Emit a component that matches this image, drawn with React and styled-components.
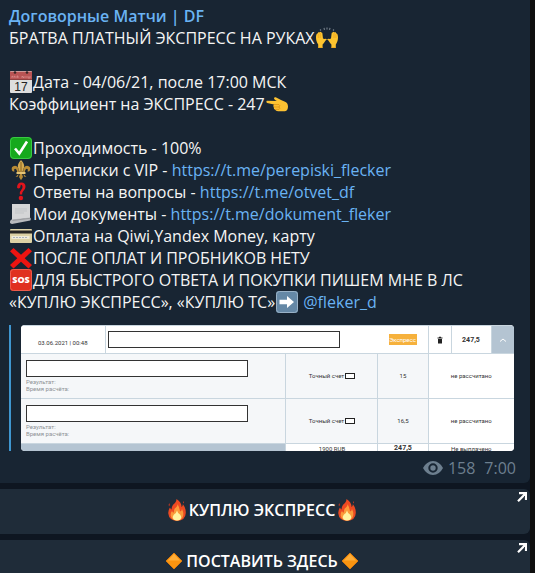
import React from 'react'
import styled, { createGlobalStyle } from 'styled-components'

const GlobalStyle = createGlobalStyle`
  * {
    box-sizing: border-box;
  }
  html, body, #root {
    height: 100%;
  }
  body {
    margin: 0;
    overflow: hidden;
    background: #0e1621;
    font-family: "Open Sans", "Noto Sans", sans-serif;
    font-size: 16px;
    line-height: 22px;
    color: #f5f5f5;
  }
`

const Page = styled.div`
  height: 100%;
  overflow: hidden;
  padding-right: 5px;
  background: linear-gradient(#0f0f0f, #0f0f0f) right / 5px 100% no-repeat;
`

const Chat = styled.main`
  display: flex;
  flex-direction: column;
  gap: 6px;
  background: #0e1621;
`

const Bubble = styled.article`
  padding: 5px 14px 4px 9px;
  background: #182533;
  border-bottom-right-radius: 6px;
`

const Channel = styled.h1`
  margin: 0;
  font-size: 16px;
  line-height: 22px;
  font-weight: 600;
  color: #6ab3f3;
`

const Line = styled.p`
  margin: 0;
  min-height: 22px;
`

const Link = styled.a`
  color: #6ab3f3;
  text-decoration: none;
`

const Emoji = styled.svg`
  width: 22px;
  height: 22px;
  margin: 0 1px;
  vertical-align: -5px;
`

const Preview = styled.div`
  margin: 12px 2px 0 0;
  padding-left: 10px;
  border-left: 2px solid #3f96d0;
`

const Shot = styled.div`
  height: 126px;
  overflow: hidden;
  border-radius: 4px;
  background: #fff;
`

const Bets = styled.table`
  width: 100%;
  table-layout: fixed;
  border-collapse: collapse;
  font-family: Roboto, sans-serif;
  font-size: 6px;
  line-height: 7px;
  color: #333;
`

const Col = styled.col`
  width: ${(props) => props.$width};
`

const Row = styled.tr`
  height: ${(props) => props.$height};
`

const Cell = styled.td`
  padding: ${(props) => props.$pad || '0'};
  border: 1px solid #c9d6df;
  border-left-width: ${(props) => (props.$first ? '0' : '1px')};
  border-right-width: 0;
  background: ${(props) => props.$bg || '#fff'};
  text-align: ${(props) => props.$align || 'center'};
  vertical-align: ${(props) => props.$valign || 'middle'};
  font-weight: ${(props) => (props.$bold ? 700 : 400)};
  font-size: ${(props) => (props.$bold ? '7px' : '6px')};
`

const HeadInner = styled.div`
  display: flex;
  align-items: center;
  justify-content: space-between;
  padding: 0 11px 0 2px;
`

const Hidden = styled.div`
  width: ${(props) => props.$width};
  height: 17px;
  border: 1px solid #333;
  background: #fff;
`

const SmallHidden = styled.span`
  display: inline-block;
  width: 10px;
  height: 6px;
  margin-left: 1px;
  border: 1px solid #222;
  background: #fff;
  vertical-align: -1px;
`

const Badge = styled.span`
  width: 28px;
  height: 11px;
  line-height: 11px;
  background: #f6b13c;
  color: #fff;
`

const Muted = styled.div`
  margin-top: 1px;
  color: #8e9296;
`

const TinyIcon = styled.svg`
  display: block;
  width: 8px;
  height: 8px;
  margin: 0 auto;
`

const Meta = styled.footer`
  display: flex;
  justify-content: flex-end;
  align-items: center;
  gap: 9px;
  margin-top: 6px;
  color: #6d7f8f;
`

const Views = styled.span`
  display: flex;
  align-items: center;
  gap: 5px;
`

const Eye = styled.svg`
  width: 20px;
  height: 14px;
`

const Action = styled.button`
  display: grid;
  grid-template-columns: 1fr;
  justify-items: center;
  align-items: center;
  position: relative;
  width: 100%;
  height: 45px;
  padding: 0 6px 4px 0;
  border: 0;
  border-radius: 0 6px 6px 0;
  background: #1f2c39;
  color: #fff;
  font: 600 16px/22px "Open Sans", "Noto Sans", sans-serif;
  cursor: pointer;
`

const Corner = styled.svg`
  position: absolute;
  top: 3px;
  right: 3px;
  width: 10px;
  height: 10px;
`

const Hands = () => (
  <Emoji viewBox="0 0 22 22" aria-hidden="true">
    <path d="M4 2.500l1 1M8 .8l.5 2M11 .5v2M14 .8l-.5 2M18 2.500l-1 1" stroke="#78838d" strokeWidth="1.1" />
    <path d="M2.200 21v-3.600C.6 15.400 0 12.800 0 10.200 0 8 .8 6.400 1.600 6.600L2.400 5.200Q3.200 4.500 3.700 5.400 4.600 4.200 5.300 5.500 6.300 5 6.400 6.600L7 11.500 8.300 12Q9.500 11.500 11 12.200L9.600 13.600Q8.400 15.700 6.600 17.500V21Z" fill="#fdc42f" />
    <path d="M19.800 21v-3.600C21.400 15.400 22 12.800 22 10.200 22 8 21.200 6.400 20.400 6.600L19.600 5.200Q18.800 4.500 18.300 5.400 17.400 4.200 16.700 5.500 15.700 5 15.600 6.600L15 11.500 13.700 12Q12.500 11.500 11 12.200L12.400 13.600Q13.600 15.700 15.400 17.500V21Z" fill="#fdc42f" />
    <path d="M2.300 7v4M4.200 6v5M18 6v5M19.900 7v4M2.200 20.500h4.400M15.400 20.500h4.400" stroke="#e79a18" strokeWidth=".6" />
  </Emoji>
)

const Calendar = () => (
  <Emoji viewBox="0 0 22 22" aria-hidden="true">
    <rect width="22" height="22" rx="1" fill="#dedede" />
    <path d="M0 .5h22V8H0z" fill="#b95454" />
    <path d="M0 8h22v1H0z" fill="#8f4040" />
    <path d="M2 7V5l1.500 1L5 5v2M7 7V5h1v2M12 7V5l2 2V5M16 7V5M18 5v2h2V5" stroke="#e09c9c" strokeWidth=".6" fill="none" />
    <circle cx="5" cy="1.500" r="1.300" fill="#3a2525" />
    <circle cx="17" cy="1.500" r="1.300" fill="#3a2525" />
    <text x="11" y="20" textAnchor="middle" fontFamily="Liberation Sans, sans-serif" fontSize="12" fill="#222">17</text>
  </Emoji>
)

const PointLeft = () => (
  <Emoji viewBox="0 -3 22 22" aria-hidden="true">
    <path d="M.8 4.700Q-.2 6.200 1.200 7.100L8 8.600Q6.800 10 7.800 11.300 7.600 13 9.200 13.800 9.700 15.200 12 15.200H19Q22 14.500 22 10.500 21.900 6.600 18.500 5.500L15 4 9.700 1.300Q8.300 .8 8 2.300 8 3.200 9.500 4.200L10.800 5Z" fill="#fdc232" />
    <path d="M8 8.600h5Q14.500 9.500 13 11H8M9.200 13.300h4Q14.500 12.600 13 11" fill="none" stroke="#d98b12" strokeWidth=".8" />
  </Emoji>
)

const Check = () => (
  <Emoji viewBox="0 0 22 22" aria-hidden="true">
    <rect width="22" height="22" rx="4" fill="#16a91d" />
    <rect x=".5" y=".5" width="21" height="21" rx="3.500" fill="none" stroke="#39c943" />
    <path d="M5 11.500l4.300 5L17 4.500" fill="none" stroke="#fff" strokeWidth="2.600" />
  </Emoji>
)

const Lily = () => (
  <Emoji viewBox="0 0 22 22" aria-hidden="true">
    <path d="M11 1Q15 5 14 8.500L12.500 13h-3L8 8.500Q7 5 11 1z" fill="#d3a950" />
    <path d="M9 13.300Q9 7 5 6.800 1 7.200 1.800 11 2.500 13 4.500 12.500 3.500 10 5.300 9.800 7 10.300 7.200 14zM13 13.300Q13 7 17 6.800 21 7.200 20.200 11 19.500 13 17.500 12.500 18.500 10 16.700 9.800 15 10.300 14.800 14z" fill="#b88b35" />
    <path d="M6.500 13h9v2h-9z" fill="#e6c576" />
    <path d="M10 15h2l1 3-2 3.200L9 18zM8.500 15L5.500 18l2.500-.5zM13.500 15l3 3-2.500-.5z" fill="#b88b35" />
    <path d="M11 3v10" stroke="#795415" strokeWidth=".8" />
  </Emoji>
)

const Question = () => (
  <Emoji viewBox="0 0 22 22" aria-hidden="true">
    <path d="M7 6.500Q7.300 1.500 11.300 1.500 15.700 1.700 15.500 6 15.300 8.300 13.300 10 12 11.200 12.100 13.500H9.800Q9.500 10.500 11.300 8.800 12.700 7.500 12.500 5.500 12.200 3.400 10.800 3.700L10.200 6.500Q8.500 8.500 7 6.500z" fill="#e2141c" />
    <circle cx="10.900" cy="17" r="2.200" fill="#e2141c" />
  </Emoji>
)

const Scroll = () => (
  <Emoji viewBox="0 0 22 22" aria-hidden="true">
    <path d="M2 1h18v14L2 17z" fill="#d5d6d7" />
    <path d="M1.500 16.500L20 14.500q1.500 1 .3 3L2 21Q-.5 20.500 0 18.500.4 16.800 1.500 16.500z" fill="#b9bbbe" />
    <path d="M2.500 17.500L20 15.300" stroke="#85878a" strokeWidth=".6" />
    <path d="M5 6h12M5 8h12M5 10h9" stroke="#bcbec0" strokeWidth=".7" />
  </Emoji>
)

const Card = () => (
  <Emoji viewBox="0 0 22 22" aria-hidden="true">
    <rect y="4" width="22" height="14" rx="1" fill="#ddd2a5" />
    <path d="M0 5.500h22V8.500H0z" fill="#262523" />
    <path d="M1.500 11h18v3h-18z" fill="#f0ecd8" />
    <path d="M3 12.500h14" stroke="#9ba4b7" strokeWidth=".8" strokeDasharray="2 1" />
  </Emoji>
)

const Cross = () => (
  <Emoji viewBox="0 0 22 22" aria-hidden="true">
    <path d="M3.500 1L11 7.800 18.500 1 22 4.200 14.700 11.200 22 18 18.500 21.500 11 14.800 3.500 21.500 0 18 7.300 11.200 0 4.200z" fill="#ee1411" />
  </Emoji>
)

const Sos = () => (
  <Emoji viewBox="0 0 22 22" aria-hidden="true">
    <rect width="22" height="22" rx="3" fill="#e0301f" />
    <rect x=".5" y=".5" width="21" height="21" rx="3" fill="none" stroke="#ec5c4d" />
    <text x="11" y="14" textAnchor="middle" fontFamily="Open Sans, sans-serif" fontWeight="800" fontSize="9" fill="#fff">SOS</text>
  </Emoji>
)

const ArrowRight = () => (
  <Emoji viewBox="0 0 22 22" aria-hidden="true">
    <rect width="22" height="22" rx="3" fill="#6588a6" />
    <rect x=".5" y=".5" width="21" height="21" rx="3" fill="none" stroke="#9ab2c7" />
    <path d="M3.500 8.700H11V5l7 6-7 6v-3.700H3.500z" fill="#fff" />
  </Emoji>
)

const Fire = () => (
  <Emoji viewBox="0 0 22 22" aria-hidden="true">
    <path d="M10.500 0Q15.500 3 15.500 8 17 7.500 16.800 5 20 9 19.800 14 19.500 21.500 11 22 3 21.500 2.300 14.500 2 11.500 4 8.500 4.500 10 5.500 10.500 5.700 6 9 4 10.500 2.500 10.500 0z" fill="#ec4a22" />
    <path d="M3.500 4Q2 5.500 3 7.500 4.300 6 3.500 4zM17.500 2Q16.500 3 17.500 4.500 18.500 3.500 17.500 2z" fill="#d9371f" />
    <path d="M11.500 5Q13.500 8.500 14 12.500 15.800 12 16 10 18 14 17 17.500 15.500 21.500 11 21.700 6 21.500 4.700 17 4.300 14 6 12 7 14 8 13.500 7.500 10 10 8.500 11.800 7 11.500 5z" fill="#fb9a3a" />
    <path d="M11 11.500Q11.500 14 14 15.500 16.500 18.500 14 20.800 11 22.300 8 20.800 5.500 18.500 8 15.500 10.500 14 11 11.500z" fill="#fff3a0" />
  </Emoji>
)

const Diamond = () => (
  <Emoji viewBox="0 0 22 22" aria-hidden="true">
    <path d="M11 3l8 8-8 8-8-8z" fill="#f99410" stroke="#e8820c" strokeWidth=".8" strokeLinejoin="round" />
    <path d="M11 4l6 6.500H5z" fill="#ffae38" />
  </Emoji>
)

const contacts = [
  { icon: <Lily />, text: 'Переписки с VIP - ', url: 'https://t.me/perepiski_flecker' },
  { icon: <Question />, text: 'Ответы на вопросы - ', url: 'https://t.me/otvet_df' },
  { icon: <Scroll />, text: 'Мои документы - ', url: 'https://t.me/dokument_fleker' },
]

const bets = [
  { id: 1, odds: '15' },
  { id: 2, odds: '16,5' },
]

const BetsTable = () => (
  <Bets>
    <colgroup>
      <Col $width="84px" />
      <Col />
      <Col $width="92px" />
      <Col $width="50px" />
      <Col $width="23px" />
      <Col $width="40px" />
      <Col $width="23px" />
    </colgroup>
    <tbody>
      <Row $height="28px">
        <Cell $first $pad="5px 0 0">03.06.2021 | 00:48</Cell>
        <Cell colSpan={3}>
          <HeadInner>
            <Hidden $width="232px" />
            <Badge>Экспресс</Badge>
          </HeadInner>
        </Cell>
        <Cell>
          <TinyIcon viewBox="0 0 8 8" aria-hidden="true">
            <path d="M1.500 1.500h5v1h-5zM3 .8h2v1H3zM2 3h4v4.500H2z" fill="#222" />
          </TinyIcon>
        </Cell>
        <Cell $bold $pad="2px 0 0">247,5</Cell>
        <Cell $bg="#b4c4d2">
          <TinyIcon viewBox="0 0 8 8" aria-hidden="true">
            <path d="M1 5.500l3-2.500 3 2.500" fill="none" stroke="#fff" />
          </TinyIcon>
        </Cell>
      </Row>
      {bets.map((bet) => (
        <Row $height="45px" key={bet.id}>
          <Cell $first colSpan={2} $bg="#f5f7f9" $align="left" $valign="top" $pad="6px 0 0 5px">
            <Hidden $width="222px" />
            <Muted>
              Результат:
              <br />
              Время расчёта:
            </Muted>
          </Cell>
          <Cell $bg="#f5f7f9" $pad="0 0 2px">
            Точный счет
            <SmallHidden />
          </Cell>
          <Cell $bg="#f5f7f9" $pad="0 0 2px">{bet.odds}</Cell>
          <Cell colSpan={3} $pad="0 0 2px">не рассчитано</Cell>
        </Row>
      ))}
      <Row $height="10px">
        <Cell $first colSpan={2} $bg="#b4c4d2" />
        <Cell>1900 RUB</Cell>
        <Cell $bold>247,5</Cell>
        <Cell colSpan={3}>Не выплачено</Cell>
      </Row>
    </tbody>
  </Bets>
)

const ActionButton = ({ icon, children }) => (
  <Action type="button">
    <span>
      {icon}
      {children}
      {icon}
    </span>
    <Corner viewBox="0 0 10 10" aria-hidden="true">
      <path d="M2 1.200h7V8M8.800 1.400L1 9.200" fill="none" stroke="#fff" strokeWidth="2.200" />
    </Corner>
  </Action>
)

const App = () => {
  return (
    <Page>
      <GlobalStyle />
      <Chat>
        <Bubble>
          <Channel>Договорные Матчи | DF</Channel>
          <Line>БРАТВА ПЛАТНЫЙ ЭКСПРЕСС НА РУКАХ<Hands /></Line>
          <Line />
          <Line><Calendar />Дата - 04/06/21, после 17:00 МСК</Line>
          <Line>Коэффициент на ЭКСПРЕСС - 247<PointLeft /></Line>
          <Line />
          <Line><Check />Проходимость - 100%</Line>
          {contacts.map((item) => (
            <Line key={item.url}>
              {item.icon}
              {item.text}
              <Link href={item.url}>{item.url}</Link>
            </Line>
          ))}
          <Line><Card />Оплата на Qiwi,Yandex Money, карту</Line>
          <Line><Cross />ПОСЛЕ ОПЛАТ И ПРОБНИКОВ НЕТУ</Line>
          <Line>
            <Sos />ДЛЯ БЫСТРОГО ОТВЕТА И ПОКУПКИ ПИШЕМ МНЕ В ЛС «КУПЛЮ ЭКСПРЕСС», «КУПЛЮ ТС»<ArrowRight />{' '}
            <Link href="https://t.me/fleker_d">@fleker_d</Link>
          </Line>
          <Preview>
            <Shot>
              <BetsTable />
            </Shot>
          </Preview>
          <Meta>
            <Views>
              <Eye viewBox="0 0 20 14" aria-hidden="true">
                <path d="M10 0Q16.500.3 20 7 16.500 13.700 10 14 3.500 13.700 0 7 3.500.3 10 0zM10 2.300a4.700 4.700 0 1 0 0 9.400 4.700 4.700 0 0 0 0-9.400z" fill="currentColor" fillRule="evenodd" />
                <circle cx="10" cy="7" r="2.700" fill="currentColor" />
              </Eye>
              158
            </Views>
            <time>7:00</time>
          </Meta>
        </Bubble>
        <ActionButton icon={<Fire />}>КУПЛЮ ЭКСПРЕСС</ActionButton>
        <ActionButton icon={<Diamond />}>ПОСТАВИТЬ ЗДЕСЬ</ActionButton>
      </Chat>
    </Page>
  )
}

export default App
